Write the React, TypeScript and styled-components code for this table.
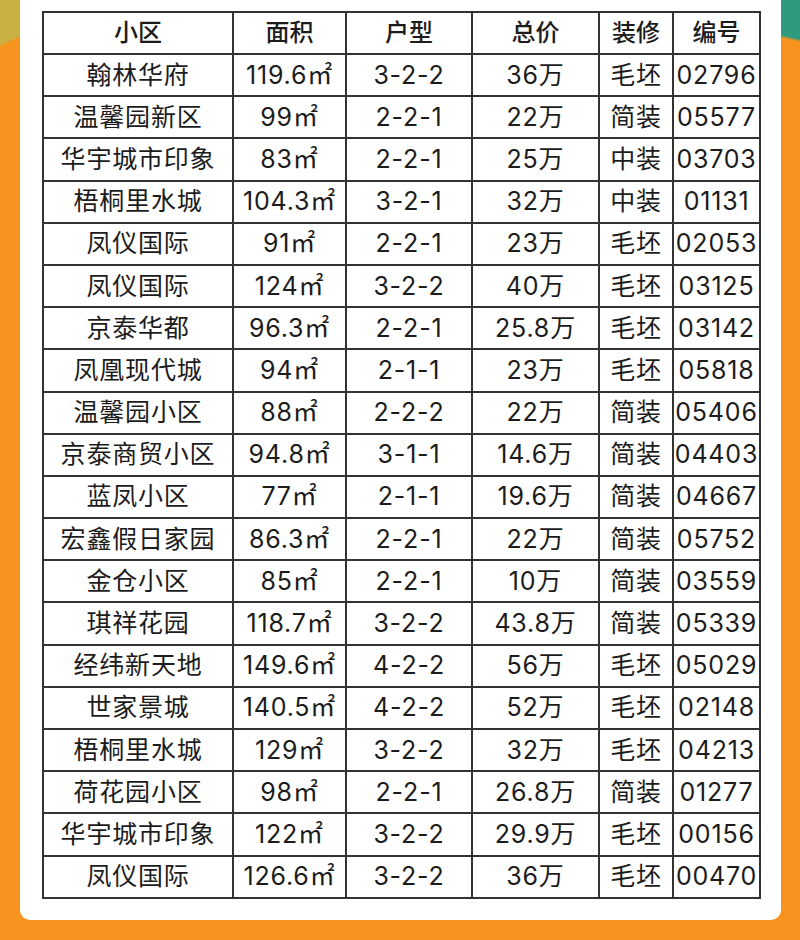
import styled, { createGlobalStyle } from "styled-components";

const GlobalStyle = createGlobalStyle`
  html, body {
    margin: 0;
    padding: 0;
  }
  body {
    width: 800px;
    min-height: 940px;
    background-color: #f7931e;
    background-image:
      linear-gradient(155deg, #c9b143 0, #c9b143 40px, #f7931e 43px),
      linear-gradient(192deg, #2e9a80 0, #2e9a80 38px, #f7931e 41px);
    background-size: 22px 90px, 22px 90px;
    background-position: left top, right top;
    background-repeat: no-repeat;
    font-family: Inter, "Noto Sans CJK SC", sans-serif;
  }
`;

const Card = styled.div`
  margin: 0 19px 0 20px;
  padding: 11px 22px 21px 22px;
  background: #ffffff;
  border-radius: 0 0 10px 10px;
`;

const Table = styled.table`
  width: 717px;
  border-collapse: collapse;
  table-layout: fixed;
  color: #1c1c1c;
`;

const HeadCell = styled.th<{ w: number }>`
  width: ${(p) => p.w}px;
  height: 40px;
  padding: 0;
  border: 2px solid #333333;
  font-size: 24px;
  font-weight: 500;
  text-align: center;
  line-height: 1;
`;

const Cell = styled.td`
  height: 40.2px;
  padding: 0;
  border: 2px solid #333333;
  font-size: 25px;
  font-weight: 400;
  letter-spacing: 0.8px;
  text-align: center;
  line-height: 1;
  white-space: nowrap;
  overflow: hidden;
`;

const columns: [string, number][] = [
  ["小区", 188],
  ["面积", 111],
  ["户型", 124],
  ["总价", 125],
  ["装修", 72],
  ["编号", 85],
];

const rows: string[][] = [
  ["翰林华府", "119.6㎡", "3-2-2", "36万", "毛坯", "02796"],
  ["温馨园新区", "99㎡", "2-2-1", "22万", "简装", "05577"],
  ["华宇城市印象", "83㎡", "2-2-1", "25万", "中装", "03703"],
  ["梧桐里水城", "104.3㎡", "3-2-1", "32万", "中装", "01131"],
  ["凤仪国际", "91㎡", "2-2-1", "23万", "毛坯", "02053"],
  ["凤仪国际", "124㎡", "3-2-2", "40万", "毛坯", "03125"],
  ["京泰华都", "96.3㎡", "2-2-1", "25.8万", "毛坯", "03142"],
  ["凤凰现代城", "94㎡", "2-1-1", "23万", "毛坯", "05818"],
  ["温馨园小区", "88㎡", "2-2-2", "22万", "简装", "05406"],
  ["京泰商贸小区", "94.8㎡", "3-1-1", "14.6万", "简装", "04403"],
  ["蓝凤小区", "77㎡", "2-1-1", "19.6万", "简装", "04667"],
  ["宏鑫假日家园", "86.3㎡", "2-2-1", "22万", "简装", "05752"],
  ["金仓小区", "85㎡", "2-2-1", "10万", "简装", "03559"],
  ["琪祥花园", "118.7㎡", "3-2-2", "43.8万", "简装", "05339"],
  ["经纬新天地", "149.6㎡", "4-2-2", "56万", "毛坯", "05029"],
  ["世家景城", "140.5㎡", "4-2-2", "52万", "毛坯", "02148"],
  ["梧桐里水城", "129㎡", "3-2-2", "32万", "毛坯", "04213"],
  ["荷花园小区", "98㎡", "2-2-1", "26.8万", "简装", "01277"],
  ["华宇城市印象", "122㎡", "3-2-2", "29.9万", "毛坯", "00156"],
  ["凤仪国际", "126.6㎡", "3-2-2", "36万", "毛坯", "00470"],
];

const App = () => {
  return (
    <>
      <GlobalStyle />
      <Card>
        <Table>
          <thead>
            <tr>
              {columns.map(([name, w]) => (
                <HeadCell key={name} w={w}>
                  {name}
                </HeadCell>
              ))}
            </tr>
          </thead>
          <tbody>
            {rows.map((row, i) => (
              <tr key={i}>
                {row.map((value, j) => (
                  <Cell key={j}>{value}</Cell>
                ))}
              </tr>
            ))}
          </tbody>
        </Table>
      </Card>
    </>
  );
};

export default App;
